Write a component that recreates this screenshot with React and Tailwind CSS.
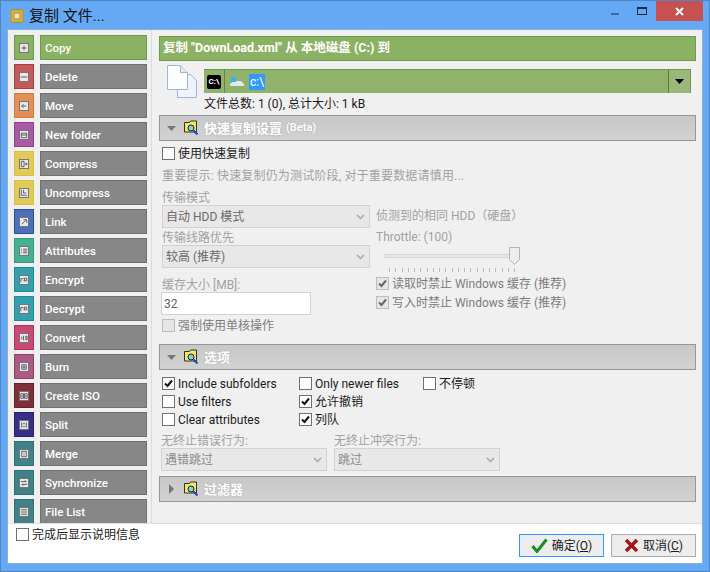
import React from 'react';

const FONT = "font-['Roboto','Noto_Sans_CJK_SC',sans-serif]";

const GLYPHS = {
  plus: 'M3 5.500h5M5.500 3v5',
  minus: 'M2 5.500h7',
  move: 'M8 5.500H3M5 3.500l-2 2 2 2',
  folder: 'M2.500 3.500h6v5h-6zM2.500 5.500h6',
  compress: 'M2.500 2.500h3v6h-3zM6 5.500h3M7.500 4l1.500 1.500L7.500 7',
  uncompress: 'M2.500 2v6h6M5 2v3.500h3',
  link: 'M3 8l4.500-4.500M5 3h3.500v3.500',
  attrs: 'M2 3.500h1M4.500 3.500h4.500M2 5.500h1M4.500 5.500h4.500M2 7.500h1M4.500 7.500h4.500',
  key: 'M2 8V4h3M6 3.500h2.500v3H6zM5 6h1',
  convert: 'M3 4v3M5 3v5M7.500 3.500h1.500v4H7.500z',
  burn: 'M3 3h5v5H3zM4.500 4.500h2v2h-2z',
  iso: 'M2 3h3v5H2zM6 3h3v5H6zM3 6.500l1-2M7 6.500l1-2',
  split: 'M3 2.500v6M8 2.500v6M4.500 4h2M4.500 7h2',
  merge: 'M3 2.500h5v6H3zM5 4.500h1M5 6.500h1',
  sync: 'M2 4h6M6.500 2.500L8 4M9 7H3M4.500 8.500L3 7',
  list: 'M2 3h7M2 5.500h7M2 8h7',
};

const ACTIONS = [
  ['Copy', 'plus', 'bg-[#8bb163] border-[#6d9a4c]'],
  ['Delete', 'minus', 'bg-[#c25b5a] border-[#aa3f3f]'],
  ['Move', 'move', 'bg-[#e28f58] border-[#d97a3a]'],
  ['New folder', 'folder', 'bg-[#ab58a6] border-[#95418f]'],
  ['Compress', 'compress', 'bg-[#e1ca5a] border-[#d9c03f]'],
  ['Uncompress', 'uncompress', 'bg-[#e1ca5a] border-[#d9c03f]'],
  ['Link', 'link', 'bg-[#4a6fbb] border-[#2d4f99]'],
  ['Attributes', 'attrs', 'bg-[#47b092] border-[#2f9a7c]'],
  ['Encrypt', 'key', 'bg-[#35a0ad] border-[#1f8a98]'],
  ['Decrypt', 'key', 'bg-[#35a0ad] border-[#1f8a98]'],
  ['Convert', 'convert', 'bg-[#c94b74] border-[#b33058]'],
  ['Burn', 'burn', 'bg-[#ab5a84] border-[#96406c]'],
  ['Create ISO', 'iso', 'bg-[#7e2f38] border-[#6a2029]'],
  ['Split', 'split', 'bg-[#3a2f86] border-[#2a2070]'],
  ['Merge', 'merge', 'bg-[#418288] border-[#2e6f75]'],
  ['Synchronize', 'sync', 'bg-[#418288] border-[#2e6f75]'],
  ['File List', 'list', 'bg-[#418288] border-[#2e6f75]'],
];

const ActionRow = ({ label, glyph, tone, active }) => (
  <div className="flex h-[25px] shrink-0 gap-[6px]">
    <div className={`flex h-[25px] w-[20px] shrink-0 items-center justify-center border ${tone}`}>
      <svg width="10" height="10" viewBox="0 0 11 11" fill="none">
        <rect x="0.500" y="0.500" width="10" height="10" fill="#e8e8e8" stroke="#6f6f6f" />
        <path d={GLYPHS[glyph]} stroke="#555" strokeWidth="1" />
      </svg>
    </div>
    <div
      className={`flex w-[107px] items-center border pl-[4px] pt-[2px] text-[11.5px] font-medium text-white ${
        active ? 'border-[#6d9a4c] bg-[#8bb163]' : 'border-[#707070] bg-[#878787]'
      }`}
    >
      {label}
    </div>
  </div>
);

const Check = ({ checked, disabled }) => (
  <span
    className={`flex h-[13px] w-[13px] shrink-0 items-center justify-center border ${
      disabled ? 'border-[#bcbcbc] bg-[#e6e6e6]' : 'border-[#707070] bg-white'
    }`}
  >
    {checked && (
      <svg width="11" height="11" viewBox="0 0 11 11" fill="none">
        <path d="M2 5.500l2.500 2.500L9 2.500" stroke={disabled ? '#666' : '#111'} strokeWidth="2" />
      </svg>
    )}
  </span>
);

const CheckRow = ({ label, checked, disabled, className = '' }) => (
  <div className={`flex h-[13px] items-center gap-[3px] text-[12px] leading-none ${disabled ? 'text-[#7d7d7d]' : 'text-[#1b1b1b]'} ${className}`}>
    <Check checked={checked} disabled={disabled} />
    <span className="whitespace-nowrap">{label}</span>
  </div>
);

const FolderLens = () => (
  <svg width="16" height="16" viewBox="0 0 16 16" fill="none" className="shrink-0">
    <path d="M0.500 2.500h5l1-1.500h6v11h-12z" fill="#f4e36c" stroke="#33331a" />
    <circle cx="7" cy="8" r="3" fill="#6fd8e0" stroke="#222" />
    <path d="M9.500 10.500l4 4" stroke="#1f3fd0" strokeWidth="2" />
  </svg>
);

const SectionBar = ({ title, suffix, open = true }) => (
  <div className="flex h-[26px] shrink-0 items-center border border-[#979797] bg-gradient-to-b from-[#c8c8c8] to-[#d2d2d2] pl-[6px] text-[13px] font-bold text-white [text-shadow:0_0_2px_#aaa]">
    <svg width="12" height="10" viewBox="0 0 12 10" className="mr-[6px] shrink-0">
      <path d={open ? 'M1 3h9L5.500 8z' : 'M3 0l5 5-5 5z'} fill="#767676" />
    </svg>
    <FolderLens />
    <span className="ml-[4px] leading-none">{title}</span>
    {suffix && <span className="ml-[4px] text-[11px] font-semibold">{suffix}</span>}
  </div>
);

const Select = ({ value, width, textClass = 'text-[#6a6a6a]' }) => (
  <div className={`flex h-[23px] shrink-0 items-center justify-between border border-[#d2d2d2] bg-[#e8e8e8] pl-[3px] pr-[4px] text-[12px] ${width} ${textClass}`}>
    <span className="mt-[1px] leading-none">{value}</span>
    <svg width="9" height="6" viewBox="0 0 9 6" fill="none">
      <path d="M1 1l3.500 3.500L8 1" stroke="#a8a8a8" strokeWidth="1.500" />
    </svg>
  </div>
);

const App = () => {
  const ticks = Array.from({ length: 21 }, (_, i) => i);

  return (
    <div className={`flex h-[572px] w-[710px] flex-col overflow-hidden border border-[#4f85c4] bg-[#65a9f5] ${FONT}`}>
      {/* title bar */}
      <div className="flex h-[28px] shrink-0 items-start">
        <svg width="14" height="14" viewBox="0 0 14 14" className="ml-[9px] mt-[8px] shrink-0">
          <rect x="1" y="1" width="12" height="12" rx="1" fill="#e8b81f" stroke="#c98a10" />
          <rect x="4" y="4" width="6" height="6" fill="#f6e59a" stroke="#7a8fb0" />
        </svg>
        <span className="ml-[5px] mt-[5px] text-[15px] leading-[20px] text-[#111]">复制 文件...</span>
        <div className="ml-auto flex items-start pr-[6px]">
          <span className="mr-[18px] mt-[12px] h-[2px] w-[8px] bg-[#44689a]" />
          <span className="mr-[9px] mt-[6px] h-[8px] w-[10px] border border-t-2 border-[#1a2a3f]" />
          <span className="flex h-[20px] w-[47px] items-center justify-center bg-[#c75050]">
            <svg width="9" height="9" viewBox="0 0 9 9" fill="none">
              <path d="M1 1l7 7M8 1l-7 7" stroke="#fff" strokeWidth="2" />
            </svg>
          </span>
        </div>
      </div>

      {/* client area */}
      <div className="mx-[6px] flex h-[535px] flex-col border border-[#8db0d8] bg-white">
        <div className="flex h-[493px] shrink-0 overflow-hidden bg-[#f0f0f0]">
          <div className="flex w-[144px] shrink-0 flex-col gap-[4px] overflow-hidden border-r border-[#dcdcdc] pl-[6px] pt-[5px]">
            {ACTIONS.map(([label, glyph, tone], i) => (
              <ActionRow key={label} label={label} glyph={glyph} tone={tone} active={i === 0} />
            ))}
          </div>

          <div className="ml-[7px] flex w-[537px] shrink-0 flex-col pt-[6px]">
            <div className="flex h-[25px] shrink-0 items-center border border-[#6d9a4c] bg-[#8bb163] pl-[3px] text-[12.5px] font-bold text-white">
              复制 "DownLoad.xml" 从 本地磁盘 (C:) 到
            </div>

            <div className="flex h-[54px] shrink-0">
              <svg width="31" height="33" viewBox="0 0 31 33" fill="none" className="ml-[8px] mt-[4px] shrink-0">
                <path d="M10.500 9.500h13l6 6v17h-19z" fill="#eef3fd" stroke="#a3b4d8" />
                <path d="M0.500 0.500h13l7 7v17h-20z" fill="#fbfdff" stroke="#a3b4d8" />
                <path d="M13.500 0.500v7h7" fill="#dfe8f8" stroke="#a3b4d8" />
              </svg>
              <div className="ml-[6px] flex flex-1 flex-col pt-[8px]">
                <div className="flex h-[24px] w-[487px] items-stretch border-t border-r border-[#6d9a4c] bg-[#90b26b]">
                  <div className="flex w-[21px] items-center justify-center border-r border-[#5f8a40]">
                    <span className="flex h-[14px] w-[14px] items-center justify-center rounded-[2px] bg-black text-[8px] font-bold leading-none text-white">C:\</span>
                  </div>
                  <div className="flex w-[24px] items-center justify-center">
                    <svg width="16" height="12" viewBox="0 0 16 12">
                      <path d="M1 8l4-3h7l3 3v2H1z" fill="#e4e8ea" />
                      <rect x="2" y="1" width="5" height="5" fill="#38b4ea" />
                    </svg>
                  </div>
                  <div className="flex flex-1 items-center">
                    <span className="flex h-[16px] items-center bg-[#3399ff] px-[1px] text-[12px] leading-none text-white">c:\</span>
                  </div>
                  <div className="flex w-[22px] items-center justify-center border-l border-[#5c7c3c] bg-[#9ab87a]">
                    <svg width="9" height="5" viewBox="0 0 9 5">
                      <path d="M0 0h9L4.500 5z" fill="#000" />
                    </svg>
                  </div>
                </div>
                <div className="mt-[3px] text-[12px] leading-[17px] text-[#1b1b1b]">文件总数: 1 (0), 总计大小: 1 kB</div>
              </div>
            </div>

            <SectionBar title="快速复制设置" suffix="(Beta)" />

            <CheckRow label="使用快速复制" className="ml-[3px] mt-[6px]" />
            <div className="ml-[3px] mt-[8px] h-[21px] text-[12px] leading-[17px] tracking-[0.18px] text-[#a2a2a2]">重要提示: 快速复制仍为测试阶段, 对于重要数据请慎用...</div>

            <div className="ml-[3px] flex h-[155px] shrink-0">
              <div className="flex w-[208px] shrink-0 flex-col">
                <div className="h-[16px] text-[12px] leading-[18px] text-[#a2a2a2]">传输模式</div>
                <Select value="自动 HDD 模式" width="w-[208px]" />
                <div className="h-[17px] text-[12px] leading-[20px] text-[#a2a2a2]">传输线路优先</div>
                <Select value="较高 (推荐)" width="w-[208px]" />
                <div className="flex h-[24px] items-end pb-[1px] text-[12px] leading-none text-[#a2a2a2]">缓存大小 [MB]:</div>
                <div className="-ml-[1px] flex h-[23px] w-[150px] shrink-0 items-center border border-[#d2d2d2] bg-white pl-[2px] text-[12px] text-[#5f5f5f]">32</div>
                <CheckRow label="强制使用单核操作" disabled className="mt-[4px]" />
              </div>
              <div className="ml-[6px] flex flex-col">
                <div className="mt-[15px] flex h-[23px] items-center text-[12px] leading-none text-[#a2a2a2]">侦测到的相同 HDD（硬盘）</div>
                <div className="flex h-[18px] items-center pt-[1px] text-[12px] leading-none text-[#a2a2a2]">Throttle: (100)</div>
                <div className="ml-[8px] mt-[2px] flex h-[18px] items-center">
                  <div className="h-[4px] w-[126px] border border-[#d6d6d6] bg-[#e6e6e6]" />
                  <svg width="11" height="18" viewBox="0 0 11 18" className="-ml-[1px] shrink-0">
                    <path d="M0.500 0.500h10v12l-5 5-5-5z" fill="#ededed" stroke="#b4b4b4" />
                  </svg>
                </div>
                <div className="ml-[13px] mt-[3px] flex h-[4px] w-[126px] justify-between">
                  {ticks.map((t) => (
                    <span key={t} className="h-[4px] w-[1px] bg-[#bdbdbd]" />
                  ))}
                </div>
                <CheckRow label="读取时禁止 Windows 缓存 (推荐)" checked disabled className="mt-[5px]" />
                <CheckRow label="写入时禁止 Windows 缓存 (推荐)" checked disabled className="mt-[6px]" />
              </div>
            </div>

            <SectionBar title="选项" />

            <div className="ml-[3px] mt-[7px] grid shrink-0 grid-cols-[137px_124px_80px] gap-y-[5px]">
              <CheckRow label="Include subfolders" checked />
              <CheckRow label="Only newer files" />
              <CheckRow label="不停顿" />
              <CheckRow label="Use filters" />
              <CheckRow label="允许撤销" checked />
              <span />
              <CheckRow label="Clear attributes" />
              <CheckRow label="列队" checked />
            </div>

            <div className="ml-[2px] mt-[6px] flex shrink-0 gap-[7px]">
              <div className="flex w-[166px] flex-col">
                <div className="h-[16px] text-[12px] leading-[18px] text-[#a2a2a2]">无终止错误行为:</div>
                <Select value="遇错跳过" width="w-[166px]" textClass="text-[#8a8a8a]" />
              </div>
              <div className="flex w-[166px] flex-col">
                <div className="h-[16px] text-[12px] leading-[18px] text-[#a2a2a2]">无终止冲突行为:</div>
                <Select value="跳过" width="w-[166px]" textClass="text-[#8a8a8a]" />
              </div>
            </div>

            <div className="mt-[5px]">
              <SectionBar title="过滤器" open={false} />
            </div>
          </div>
        </div>

        {/* footer */}
        <div className="flex flex-1 items-start justify-between border-t border-[#dcdcdc] bg-white pl-[8px] pr-[6px]">
          <CheckRow label="完成后显示说明信息" className="mt-[4px]" />
          <div className="mt-[10px] flex gap-[7px]">
            <div className="flex h-[23px] w-[85px] items-center justify-center gap-[4px] border border-[#3399ff] bg-[#ededed] text-[12px] text-[#1b1b1b]">
              <svg width="17" height="15" viewBox="0 0 17 15" fill="none">
                <path d="M1.500 8l4.500 5.500L15.500 1.500" stroke="#1f8a1f" strokeWidth="3" />
              </svg>
              <span>确定(<span className="underline">O</span>)</span>
            </div>
            <div className="flex h-[23px] w-[85px] items-center justify-center gap-[4px] border border-[#acacac] bg-[#ededed] text-[12px] text-[#1b1b1b]">
              <svg width="15" height="15" viewBox="0 0 15 15" fill="none">
                <path d="M2 2l11 11M13 2L2 13" stroke="#a01818" strokeWidth="3.500" />
              </svg>
              <span>取消(<span className="underline">C</span>)</span>
            </div>
          </div>
        </div>
      </div>
    </div>
  );
};

export default App;
